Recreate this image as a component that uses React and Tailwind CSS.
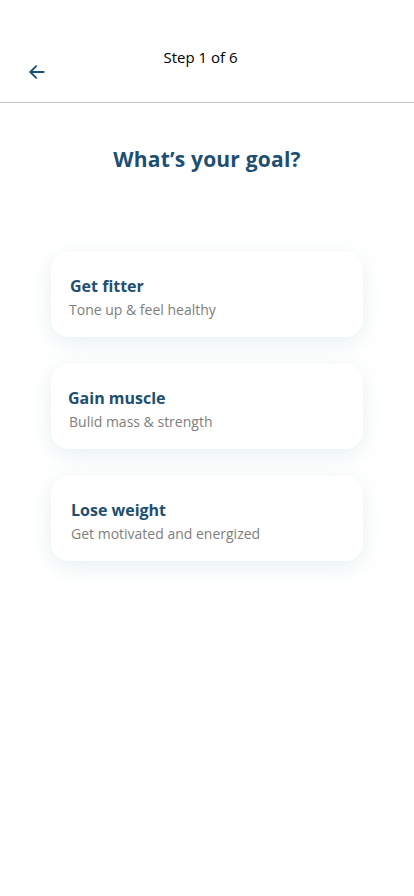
import React from 'react';

const goals = [
  { title: 'Get fitter', sub: 'Tone up & feel healthy', tx: 'pl-[19px]', sx: 'pl-[18px]' },
  { title: 'Gain muscle', sub: 'Bulid mass & strength', tx: 'pl-[17px]', sx: 'pl-[18px]' },
  { title: 'Lose weight', sub: 'Get motivated and energized', tx: 'pl-[20px]', sx: 'pl-[20px]' },
];

function App() {
  return (
    <div className="min-h-screen bg-white flex flex-col" style={{ fontFamily: '"Open Sans", "Noto Sans", sans-serif' }}>
      {/* Header */}
      <header className="h-[103px] border-b border-[#c4c4c4] relative">
        <div className="pt-[46px] text-center text-[15px] text-black pr-[13px]">Step 1 of 6</div>
        <button className="absolute left-[27px] top-[62px] w-5 h-5 flex items-center justify-center text-[#1d4f73]">
          <svg width="20" height="20" viewBox="0 0 24 24" fill="none" stroke="currentColor" strokeWidth="2.2" strokeLinecap="round" strokeLinejoin="round">
            <path d="M20 12H4" />
            <path d="M11 5l-7 7 7 7" />
          </svg>
        </button>
      </header>

      <h1 className="mt-[41px] text-center text-[21px] font-bold text-[#1d4f73] tracking-[0.2px]">What’s your goal?</h1>

      {/* Cards */}
      <div className="mt-[76px] flex flex-col gap-[27px] items-center">
        {goals.map((g) => (
          <div
            key={g.title}
            className="w-[312px] h-[85px] bg-white rounded-[18px] shadow-[0_6px_22px_rgba(120,170,175,0.18)] flex flex-col pt-[24px] pr-4"
          >
            <div className={`${g.tx} text-[16px] font-bold text-[#1d4f73] leading-5`}>{g.title}</div>
            <div className={`${g.sx} mt-[6px] text-[14px] text-[#7e7e7e] leading-4`}>{g.sub}</div>
          </div>
        ))}
      </div>
    </div>
  );
}

export default App;
